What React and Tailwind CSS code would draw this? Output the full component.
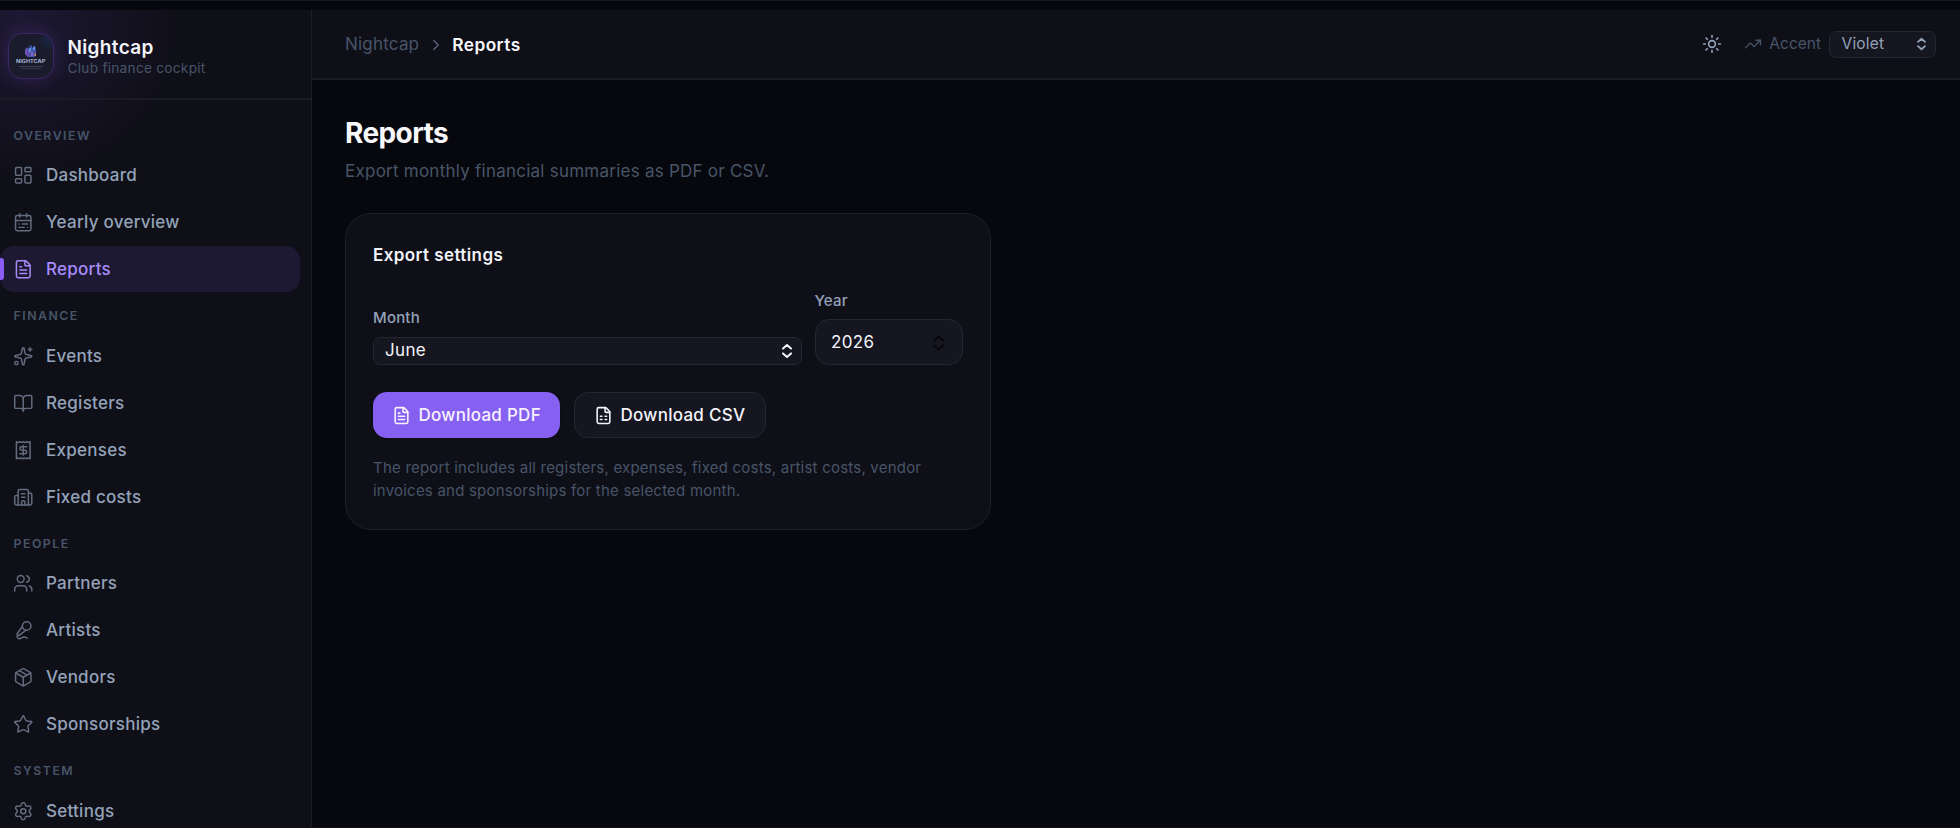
import React from 'react';
import {
  LayoutDashboard, CalendarRange, FileText, Sparkles, BookOpen, Building2, Users, MicVocal,
  Package, Star, Settings, ChevronRight, Sun, TrendingUp, FileSpreadsheet, Receipt,
} from 'lucide-react';

const groups = [
  { title: 'Overview', items: [['Dashboard', LayoutDashboard], ['Yearly overview', CalendarRange], ['Reports', FileText]] },
  { title: 'Finance', items: [['Events', Sparkles], ['Registers', BookOpen], ['Expenses', Receipt], ['Fixed costs', Building2]] },
  { title: 'People', items: [['Partners', Users], ['Artists', MicVocal], ['Vendors', Package], ['Sponsorships', Star]] },
  { title: 'System', items: [['Settings', Settings]] },
];

function UpDown({ className, strokeWidth = 2 }) {
  return (
    <svg viewBox="0 0 12 16" className={className} fill="none" stroke="currentColor" strokeWidth={strokeWidth} strokeLinecap="round" strokeLinejoin="round">
      <path d="M2 5.6 6 2l4 3.6M2 10.4 6 14l4-3.6" />
    </svg>
  );
}

function Logo() {
  return (
    <div className="mt-[4px] flex h-[46px] w-[46px] shrink-0 flex-col items-center overflow-hidden rounded-[14px] border border-[#3b2768] bg-[#1b1c2b] bg-[radial-gradient(circle_at_40px_6px,#182542,transparent_12px)] pt-[10px] shadow-[0_0_18px_rgba(139,92,246,0.2)]">
      <svg viewBox="0 0 16 14" className="h-[14px] w-[16px] shrink-0">
        <path d="M2 5 5 3l1 2 1-4 2 1v2l3-3 1 5v6l-2 1H5L2 10Z" fill="#4553a8" />
        <path d="M2 5v5l3 3 2-4-2-4Z" fill="#6b4fb3" />
        <path d="M6 4h2v4H6zM10 3h2v3h-2z" fill="#5b8fdc" />
        <path d="M8 8h2v4H8z" fill="#8a63c9" />
        <path d="M11.5 9.5h1.5v2.5h-1.5z" fill="#c9835f" />
      </svg>
      <div className="mt-px scale-x-[1.15] text-[4.8px] font-bold leading-[5px] text-[#a9b4dc]">NIGHTCAP</div>
      <div className="mt-[2px] h-px w-[24px] shrink-0 bg-[#3c3f52]" />
      <div className="mt-px h-px w-[20px] shrink-0 bg-[#343748]" />
    </div>
  );
}

function Sidebar() {
  return (
    <aside className="flex w-[312px] shrink-0 flex-col border-r border-[#1d1d28] bg-[#0f0f18] bg-[radial-gradient(circle_at_20px_10px,rgba(139,92,246,0.12),transparent_160px)]">
      <div className="flex h-[90px] shrink-0 items-center gap-[13.5px] border-b-2 border-[#1b1b26] pl-2">
        <Logo />
        <div className="flex flex-col pt-[6px]">
          <span className="text-[19px] font-semibold leading-[22px] tracking-[0.35px] text-[#f3f3fa]">Nightcap</span>
          <span className="text-[13.7px] leading-[19px] tracking-[0.25px] text-[#475569]">Club finance cockpit</span>
        </div>
      </div>
      <nav className="flex flex-col pt-[26.5px]">
        {groups.map((g) => (
          <div key={g.title} className="mb-[15px] flex flex-col">
            <div className="mb-[7.5px] pl-[13.5px] text-[12.3px] font-semibold uppercase leading-[18px] tracking-[1.5px] text-[#475569]">{g.title}</div>
            <div className="flex flex-col gap-px">
              {g.items.map(([label, Icon]) => {
                const active = label === 'Reports';
                return (
                  <div key={label} className={active
                    ? 'relative flex h-[46px] w-[300px] items-center gap-[12.5px] rounded-[14px] bg-[#1e1932] pl-[13px] text-[#a78bfa]'
                    : 'flex h-[46px] w-[300px] items-center gap-[12.5px] pl-[13px] text-[#94a3b8]'}>
                    {active && <span className="absolute left-0 top-[12px] h-[22px] w-[4px] rounded-r-[3px] bg-[#8b5cf6]" />}
                    <Icon size={20.5} strokeWidth={1.75} className={active ? 'mt-px shrink-0' : 'mt-px shrink-0 text-[#636b7e]'} />
                    <span className="text-[17px] font-medium leading-6 tracking-[0.26px]">{label}</span>
                  </div>
                );
              })}
            </div>
          </div>
        ))}
      </nav>
    </aside>
  );
}

function Header() {
  return (
    <header className="flex h-[70px] shrink-0 items-center justify-between border-b-2 border-[#1b1b26] bg-[#0f0f18] pl-[33px] pr-6">
      <div className="flex items-center pt-[2px] text-[17px]">
        <span className="tracking-[0.2px] text-[#475569]">Nightcap</span>
        <ChevronRight size={18} strokeWidth={1.75} className="ml-[8px] mr-[7px] text-[#5a667c]" />
        <span className="text-[17.3px] font-semibold tracking-[0.45px] text-[#f8f8fc]">Reports</span>
      </div>
      <div className="flex items-center text-[#475569]">
        <Sun size={20} strokeWidth={2} className="text-[#94a3b8]" />
        <TrendingUp size={18} strokeWidth={1.75} className="ml-[22px]" />
        <span className="ml-[7px] text-[15.5px]">Accent</span>
        <div className="ml-2 flex h-[27px] w-[107px] items-center justify-between rounded-[7px] border border-[#262633] bg-[#161620] pl-[11.5px] pr-[8px] text-[15.5px] tracking-[0.2px] text-[#94a3b8]">
          Violet
          <UpDown className="h-[14px] w-[11px]" />
        </div>
      </div>
    </header>
  );
}

function ExportCard() {
  return (
    <section className="mt-[29px] flex h-[317px] w-[645.5px] flex-col rounded-[26px] border border-[#1f1f2a] bg-[#0f0f18] px-[27px]">
      <h2 className="mt-[29px] text-[17px] font-semibold leading-6 tracking-[0.42px] text-[#f3f3fa]">Export settings</h2>
      <div className="mt-[23px] flex items-end gap-[13px]">
        <div className="flex flex-col">
          <label className="mb-[8px] text-[15px] font-medium leading-[22px] tracking-[0.2px] text-[#94a3b8]">Month</label>
          <div className="flex h-[28px] w-[428.5px] items-center justify-between rounded-[7px] border border-[#262633] bg-[#161620] pl-[11px] pr-2 text-[17px] tracking-[0.35px] text-[#f3f3fa]">
            June
            <UpDown className="h-[16px] w-[12px]" />
          </div>
        </div>
        <div className="flex flex-col">
          <label className="mb-[7px] text-[15px] font-medium leading-[22px] tracking-[0.2px] text-[#94a3b8]">Year</label>
          <div className="flex h-[46px] w-[148px] items-center justify-between rounded-[14px] border border-[#262633] bg-[#161620] pl-[15.5px] pr-[17px] pt-px text-[17px] tracking-[0.35px] text-[#f3f3fa]">
            2026
            <UpDown className="h-[18px] w-[13px] text-[#08080c]" />
          </div>
        </div>
      </div>
      <div className="mt-[27px] flex gap-[14px]">
        <button className="flex h-[46px] w-[187px] items-center gap-[8px] rounded-[14px] bg-[#8660f0] pl-[18.5px] pt-px text-[17px] font-medium tracking-[0.27px] text-[#f6f3ff] shadow-sm">
          <FileText size={19} strokeWidth={2} />
          Download PDF
        </button>
        <button className="flex h-[46px] w-[192px] items-center gap-[8px] rounded-[14px] border border-[#262633] bg-[#161620] pl-[18.5px] pt-px text-[17px] font-medium tracking-[0.27px] text-[#f3f3fa]">
          <FileSpreadsheet size={19} strokeWidth={2} />
          Download CSV
        </button>
      </div>
      <p className="mt-[18px] whitespace-nowrap text-[15px] leading-[23px] tracking-[0.215px] text-[#475569]">
        The report includes all registers, expenses, fixed costs, artist costs, vendor<br />
        invoices and sponsorships for the selected month.
      </p>
    </section>
  );
}

export default function App() {
  return (
    <div className="flex h-[828px] w-[1960px] flex-col overflow-hidden border-b border-[#140e14] bg-[#07080d] font-['Inter',sans-serif]">
      <div className="h-[10px] shrink-0 border-t border-[#17181d]" />
      <div className="flex min-h-0 flex-1 overflow-hidden">
        <Sidebar />
        <div className="flex min-w-0 flex-1 flex-col">
          <Header />
          <main className="flex flex-col pl-[33px] pt-[34px]">
            <h1 className="text-[28px] font-bold leading-[38px] tracking-[-0.6px] text-[#f8f8fc]">Reports</h1>
            <p className="mt-[6px] text-[17px] leading-[26px] tracking-[0.24px] text-[#475569]">Export monthly financial summaries as PDF or CSV.</p>
            <ExportCard />
          </main>
        </div>
      </div>
    </div>
  );
}
